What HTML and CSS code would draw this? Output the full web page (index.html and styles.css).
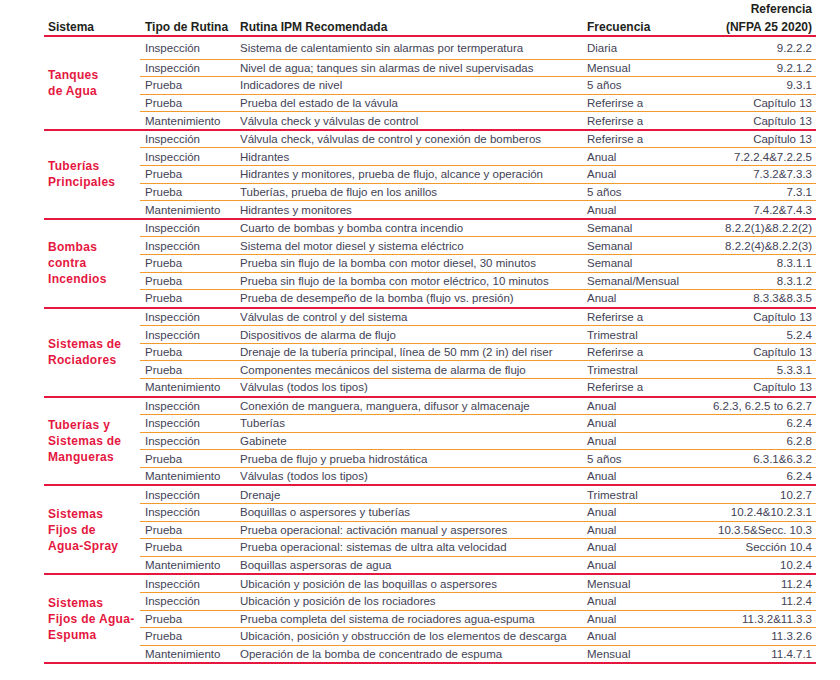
FILE: index.html
```html
<!DOCTYPE html>
<html lang="es">
<head>
<meta charset="utf-8">
<title>Rutinas IPM</title>
<link rel="stylesheet" href="styles.css">
</head>
<body>
<div class="sheet">
  <div class="head">
    <div class="hc c1">Sistema</div>
    <div class="hc c2">Tipo de Rutina</div>
    <div class="hc c3">Rutina IPM Recomendada</div>
    <div class="hc c4">Frecuencia</div>
    <div class="hc c5">Referencia<br>(NFPA 25 2020)</div>
  </div>

  <div class="group first">
    <div class="label">Tanques<br>de Agua</div>
    <div class="rows">
      <div class="row"><span>Inspección</span><span>Sistema de calentamiento sin alarmas por termperatura</span><span>Diaria</span><span class="ref">9.2.2.2</span></div>
      <div class="row"><span>Inspección</span><span>Nivel de agua; tanques sin alarmas de nivel supervisadas</span><span>Mensual</span><span class="ref">9.2.1.2</span></div>
      <div class="row"><span>Prueba</span><span>Indicadores de nivel</span><span>5 años</span><span class="ref">9.3.1</span></div>
      <div class="row"><span>Prueba</span><span>Prueba del estado de la vávula</span><span>Referirse a</span><span class="ref">Capítulo 13</span></div>
      <div class="row"><span>Mantenimiento</span><span>Válvula check y válvulas de control</span><span>Referirse a</span><span class="ref">Capítulo 13</span></div>
    </div>
  </div>

  <div class="group">
    <div class="label">Tuberías<br>Principales</div>
    <div class="rows">
      <div class="row"><span>Inspección</span><span>Válvula check, válvulas de control y conexión de bomberos</span><span>Referirse a</span><span class="ref">Capítulo 13</span></div>
      <div class="row"><span>Inspección</span><span>Hidrantes</span><span>Anual</span><span class="ref">7.2.2.4&amp;7.2.2.5</span></div>
      <div class="row"><span>Prueba</span><span>Hidrantes y monitores, prueba de flujo, alcance y operación</span><span>Anual</span><span class="ref">7.3.2&amp;7.3.3</span></div>
      <div class="row"><span>Prueba</span><span>Tuberías, prueba de flujo en los anillos</span><span>5 años</span><span class="ref">7.3.1</span></div>
      <div class="row"><span>Mantenimiento</span><span>Hidrantes y monitores</span><span>Anual</span><span class="ref">7.4.2&amp;7.4.3</span></div>
    </div>
  </div>

  <div class="group">
    <div class="label">Bombas<br>contra<br>Incendios</div>
    <div class="rows">
      <div class="row"><span>Inspección</span><span>Cuarto de bombas y bomba contra incendio</span><span>Semanal</span><span class="ref">8.2.2(1)&amp;8.2.2(2)</span></div>
      <div class="row"><span>Inspección</span><span>Sistema del motor diesel y sistema eléctrico</span><span>Semanal</span><span class="ref">8.2.2(4)&amp;8.2.2(3)</span></div>
      <div class="row"><span>Prueba</span><span>Prueba sin flujo de la bomba con motor diesel, 30 minutos</span><span>Semanal</span><span class="ref">8.3.1.1</span></div>
      <div class="row"><span>Prueba</span><span>Prueba sin flujo de la bomba con motor eléctrico, 10 minutos</span><span>Semanal/Mensual</span><span class="ref">8.3.1.2</span></div>
      <div class="row"><span>Prueba</span><span>Prueba de desempeño de la bomba (flujo vs. presión)</span><span>Anual</span><span class="ref">8.3.3&amp;8.3.5</span></div>
    </div>
  </div>

  <div class="group">
    <div class="label">Sistemas de<br>Rociadores</div>
    <div class="rows">
      <div class="row"><span>Inspección</span><span>Válvulas de control y del sistema</span><span>Referirse a</span><span class="ref">Capítulo 13</span></div>
      <div class="row"><span>Inspección</span><span>Dispositivos de alarma de flujo</span><span>Trimestral</span><span class="ref">5.2.4</span></div>
      <div class="row"><span>Prueba</span><span>Drenaje de la tubería principal, línea de 50 mm (2 in) del riser</span><span>Referirse a</span><span class="ref">Capítulo 13</span></div>
      <div class="row"><span>Prueba</span><span>Componentes mecánicos del sistema de alarma de flujo</span><span>Trimestral</span><span class="ref">5.3.3.1</span></div>
      <div class="row"><span>Mantenimiento</span><span>Válvulas (todos los tipos)</span><span>Referirse a</span><span class="ref">Capítulo 13</span></div>
    </div>
  </div>

  <div class="group">
    <div class="label">Tuberías y<br>Sistemas de<br>Mangueras</div>
    <div class="rows">
      <div class="row"><span>Inspección</span><span>Conexión de manguera, manguera, difusor y almacenaje</span><span>Anual</span><span class="ref">6.2.3, 6.2.5 to 6.2.7</span></div>
      <div class="row"><span>Inspección</span><span>Tuberías</span><span>Anual</span><span class="ref">6.2.4</span></div>
      <div class="row"><span>Inspección</span><span>Gabinete</span><span>Anual</span><span class="ref">6.2.8</span></div>
      <div class="row"><span>Prueba</span><span>Prueba de flujo y prueba hidrostática</span><span>5 años</span><span class="ref">6.3.1&amp;6.3.2</span></div>
      <div class="row"><span>Mantenimiento</span><span>Válvulas (todos los tipos)</span><span>Anual</span><span class="ref">6.2.4</span></div>
    </div>
  </div>

  <div class="group">
    <div class="label">Sistemas<br>Fijos de<br>Agua-Spray</div>
    <div class="rows">
      <div class="row"><span>Inspección</span><span>Drenaje</span><span>Trimestral</span><span class="ref">10.2.7</span></div>
      <div class="row"><span>Inspección</span><span>Boquillas o aspersores y tuberías</span><span>Anual</span><span class="ref">10.2.4&amp;10.2.3.1</span></div>
      <div class="row"><span>Prueba</span><span>Prueba operacional: activación manual y aspersores</span><span>Anual</span><span class="ref">10.3.5&amp;Secc. 10.3</span></div>
      <div class="row"><span>Prueba</span><span>Prueba operacional: sistemas de ultra alta velocidad</span><span>Anual</span><span class="ref">Sección 10.4</span></div>
      <div class="row"><span>Mantenimiento</span><span>Boquillas aspersoras de agua</span><span>Anual</span><span class="ref">10.2.4</span></div>
    </div>
  </div>

  <div class="group">
    <div class="label">Sistemas<br>Fijos de Agua-<br>Espuma</div>
    <div class="rows">
      <div class="row"><span>Inspección</span><span>Ubicación y posición de las boquillas o aspersores</span><span>Mensual</span><span class="ref">11.2.4</span></div>
      <div class="row"><span>Inspección</span><span>Ubicación y posición de los rociadores</span><span>Anual</span><span class="ref">11.2.4</span></div>
      <div class="row"><span>Prueba</span><span>Prueba completa del sistema de rociadores agua-espuma</span><span>Anual</span><span class="ref">11.3.2&amp;11.3.3</span></div>
      <div class="row"><span>Prueba</span><span>Ubicación, posición y obstrucción de los elementos de descarga</span><span>Anual</span><span class="ref">11.3.2.6</span></div>
      <div class="row"><span>Mantenimiento</span><span>Operación de la bomba de concentrado de espuma</span><span>Mensual</span><span class="ref">11.4.7.1</span></div>
    </div>
  </div>
</div>
</body>
</html>
```

FILE: styles.css
```css
html, body {
  margin: 0;
  padding: 0;
  background: #ffffff;
}

.sheet {
  width: 772px;
  margin-left: 44px;
  font-family: "Liberation Sans", Arial, sans-serif;
  color: #424256;
  font-size: 11.5px;
}

.head {
  display: grid;
  grid-template-columns: 96px 95px 347px 1fr 120px;
  height: 35px;
  align-items: end;
  border-bottom: 2px solid #e5173f;
  font-weight: bold;
  font-size: 12px;
  color: #231f20;
  line-height: 18px;
  box-sizing: content-box;
}

.hc {
  padding-left: 5px;
  padding-bottom: 1px;
}

.hc.c1 {
  padding-left: 4px;
}

.hc.c5 {
  text-align: right;
  padding-left: 0;
  padding-right: 4px;
}

.group {
  display: grid;
  grid-template-columns: 96px 1fr;
  border-bottom: 2px solid #e5173f;
}

.label {
  display: flex;
  align-items: center;
  padding-left: 4px;
  color: #e5173f;
  font-weight: bold;
  font-size: 12px;
  line-height: 16px;
  letter-spacing: 0.3px;
}

.row {
  display: grid;
  grid-template-columns: 95px 347px 1fr 120px;
  height: 16.58px;
  align-items: center;
  line-height: 14px;
  white-space: nowrap;
  border-bottom: 1px solid #f39a2b;
}

.row:last-child {
  border-bottom: none;
}

.group.first .row:first-child {
  height: 21.6px;
}

.row span {
  padding-left: 5px;
}

.row .ref {
  text-align: right;
  padding-left: 0;
  padding-right: 4px;
}
```
